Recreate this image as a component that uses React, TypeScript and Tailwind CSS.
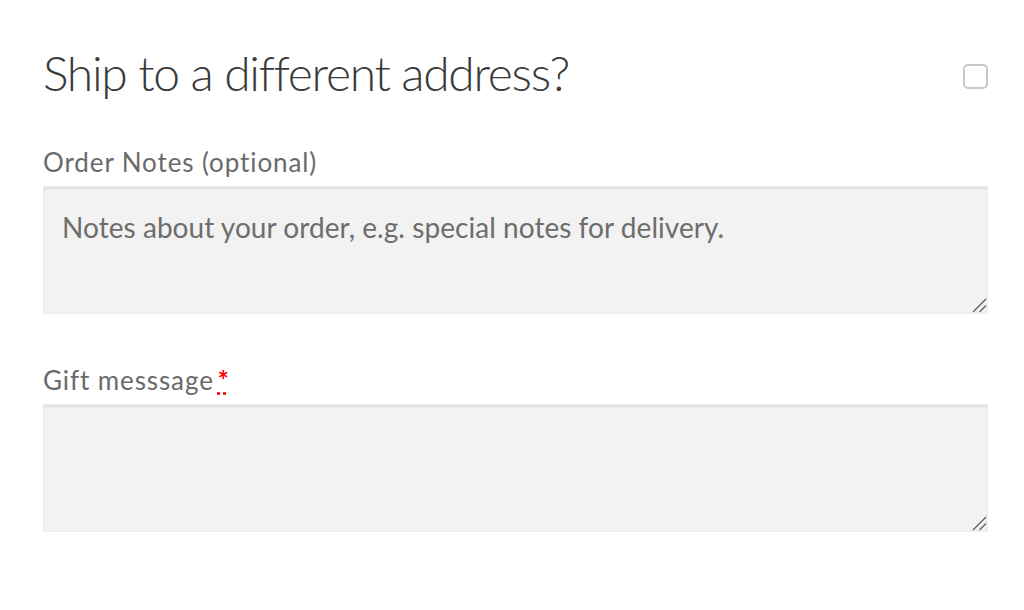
import React from "react";

function Handle() {
  return (
    <svg
      className="absolute right-[1px] bottom-[1px] pointer-events-none"
      width="16"
      height="16"
      viewBox="0 0 16 16"
    >
      <line x1="15" y1="2" x2="2" y2="15" stroke="#5a5a5a" strokeWidth="1.3" />
      <line x1="15" y1="8.5" x2="8.5" y2="15" stroke="#5a5a5a" strokeWidth="1.3" />
    </svg>
  );
}

const taClass =
  "block w-full h-[128px] bg-[#f2f2f2] border border-[#ededed] shadow-[inset_0_2px_2px_rgba(0,0,0,0.08)] pt-[26px] px-[18px] text-[28px] leading-[28px] text-[#6d6d6d] placeholder:text-[#6d6d6d] outline-none resize-none tracking-[0.05px]";

export default function App() {
  return (
    <div
      className="w-[1024px] h-[610px] bg-white overflow-hidden pl-[43px] pr-[36px] pt-[49px]"
      style={{ fontFamily: "Lato, 'Noto Sans', sans-serif" }}
    >
      <div className="flex items-start justify-between">
        <h3 className="text-[48px] leading-[48px] font-light text-[#3a3a3a] tracking-[-1.3px]">
          Ship to a different address?
        </h3>
        <div className="mt-[15px] w-[25px] h-[25px] rounded-[5px] border-2 border-[#c9c9c9] bg-white" />
      </div>

      <label className="block mt-[52px] text-[26px] leading-[26px] text-[#6a6a6a] tracking-[0.9px]">
        Order Notes (optional)
      </label>
      <div className="relative mt-[11px]">
        <textarea
          className={taClass}
          placeholder="Notes about your order, e.g. special notes for delivery."
          style={{ fontFamily: "Lato, 'Noto Sans', sans-serif" }}
        />
        <Handle />
      </div>

      <label className="block mt-[53px] text-[26px] leading-[26px] text-[#6a6a6a] tracking-[0.9px]">
        Gift messsage
        <abbr
          title="required"
          className="ml-[4px] text-[#ff0000] font-bold no-underline"
          style={{ textDecoration: "underline dotted #ff0000" }}
        >
          *
        </abbr>
      </label>
      <div className="relative mt-[11px]">
        <textarea
          className={taClass}
          style={{ fontFamily: "Lato, 'Noto Sans', sans-serif" }}
        />
        <Handle />
      </div>
    </div>
  );
}
